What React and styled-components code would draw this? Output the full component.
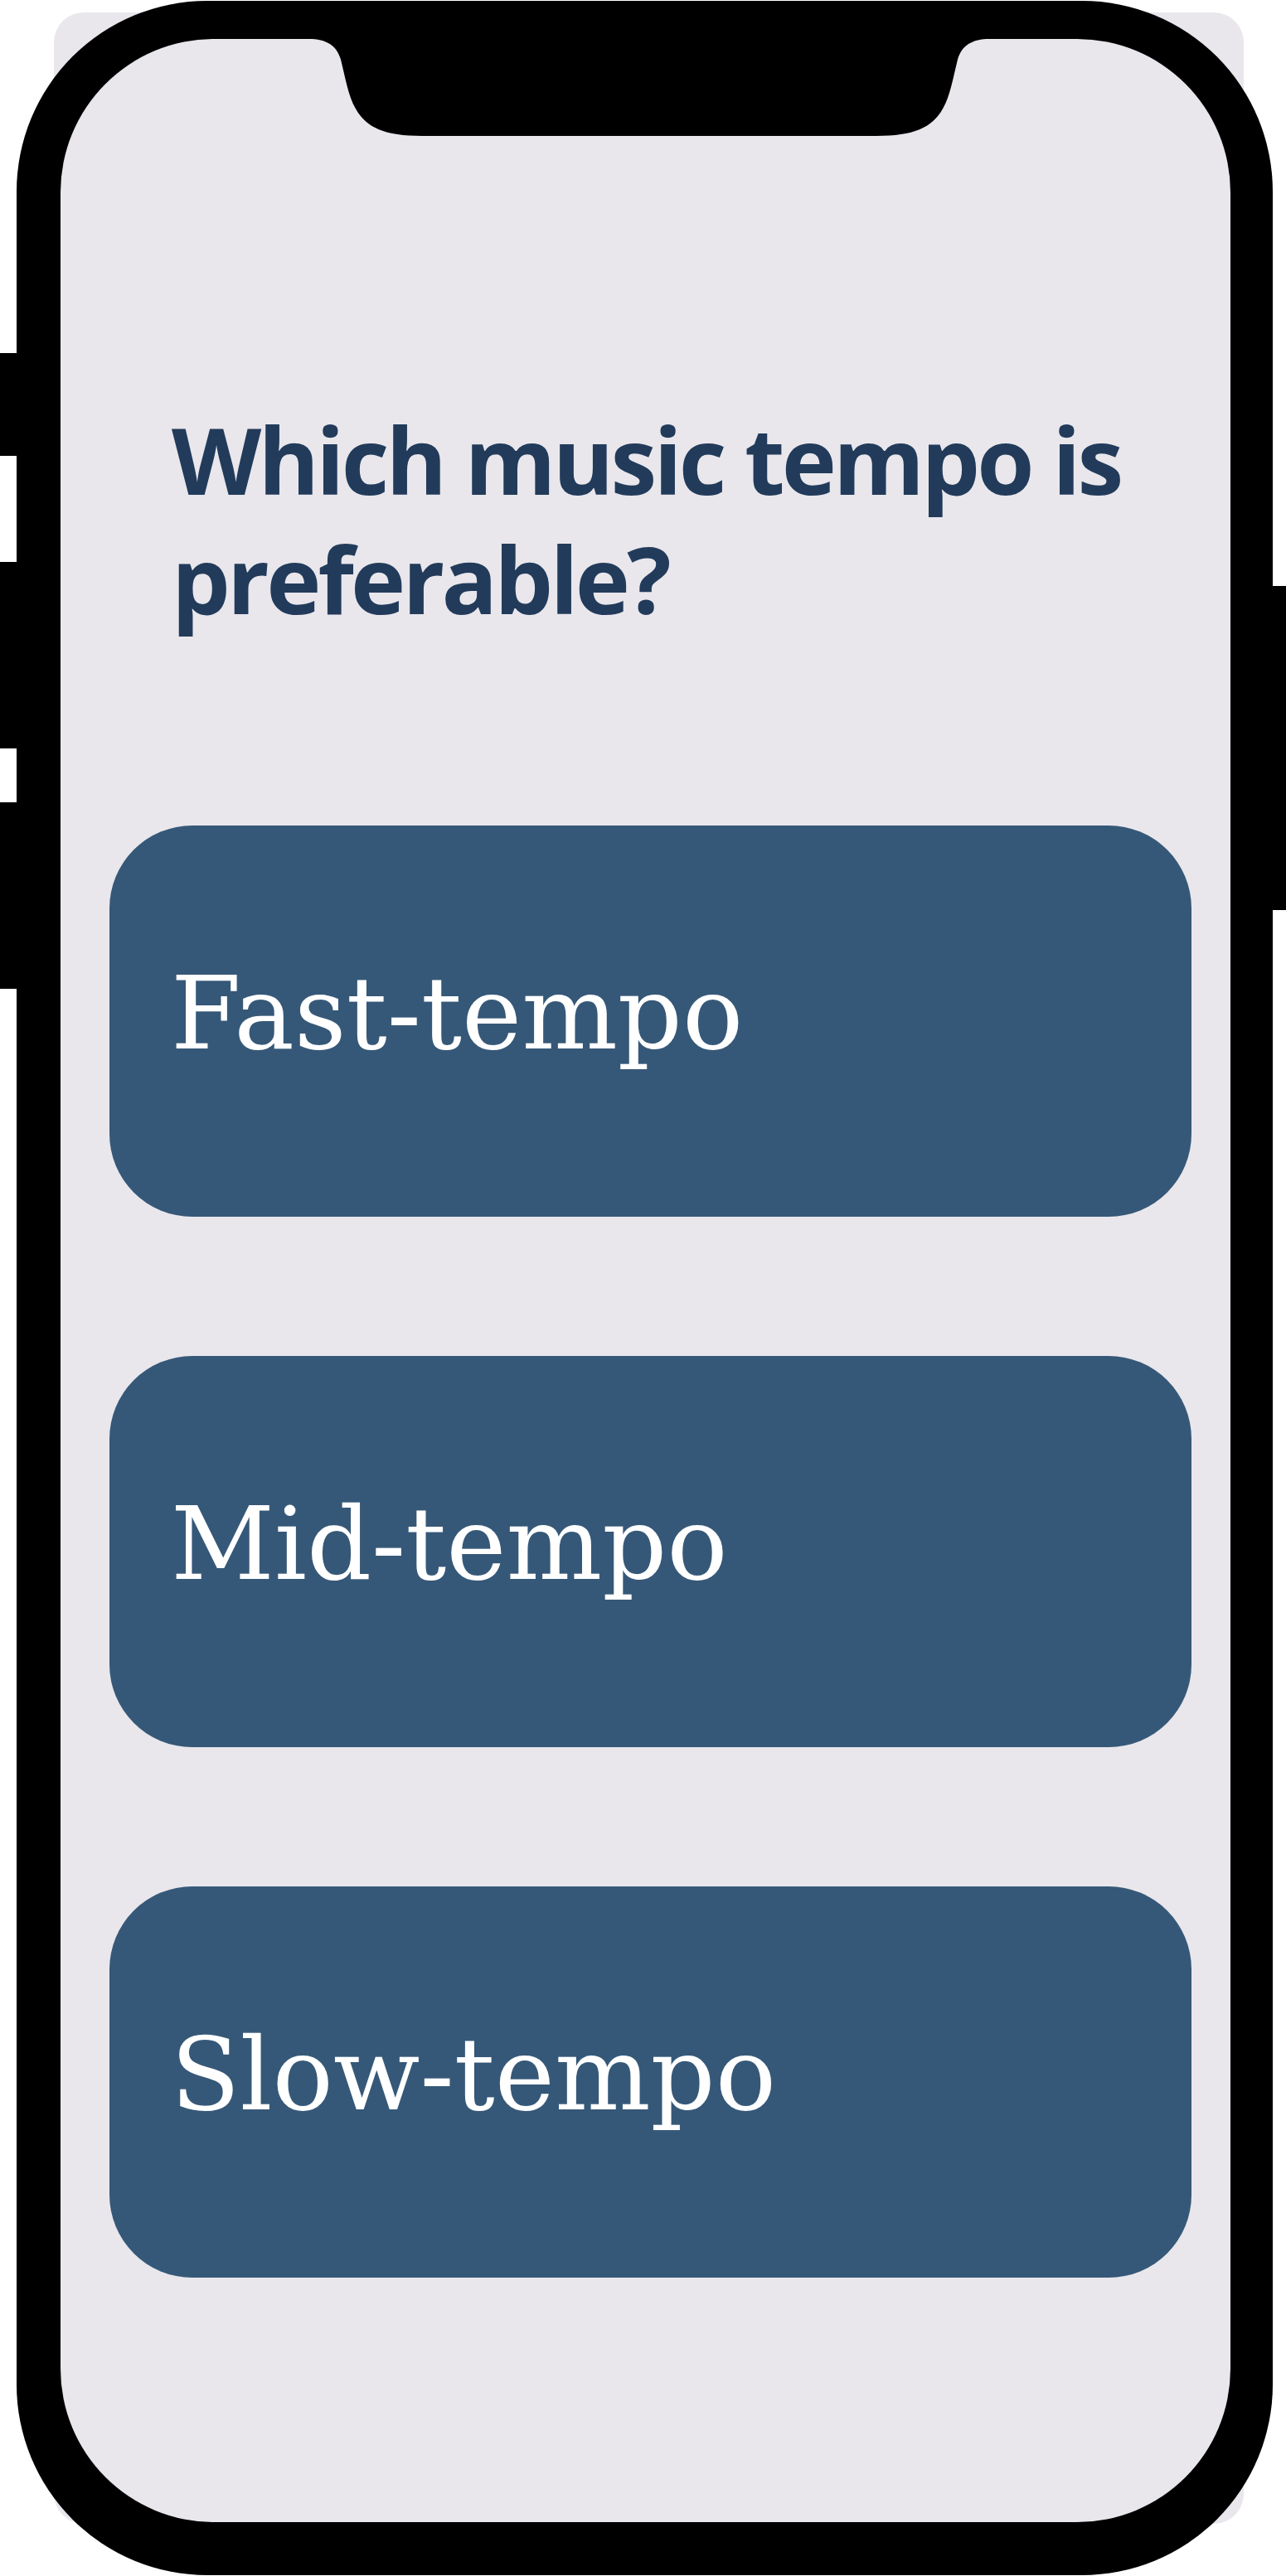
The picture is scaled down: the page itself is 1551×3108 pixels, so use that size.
import React from 'react';
import styled, { createGlobalStyle } from 'styled-components';

const GlobalStyle = createGlobalStyle`
  * {
    box-sizing: border-box;
  }

  body {
    margin: 0;
    background: #ffffff;
  }
`;

// Page stage: side buttons, phone, side buttons in one row.
// The light card peeking out behind the phone is a pseudo element.
const Stage = styled.div`
  position: relative;
  display: flex;
  width: 1551px;
  height: 3108px;
  padding-top: 1px;

  &::before {
    content: '';
    position: absolute;
    left: 65px;
    top: 15px;
    width: 1435px;
    height: 3030px;
    border-radius: 36px;
    background: #e9e7ec;
  }
`;

const Rail = styled.div`
  display: flex;
  flex-direction: column;
  flex-shrink: 0;
  width: ${({ width }) => width}px;
  padding-top: ${({ offset }) => offset}px;
`;

const SideButton = styled.span`
  display: block;
  height: ${({ height }) => height}px;
  margin-top: ${({ gap = 0 }) => gap}px;
  margin-left: ${({ side }) => (side === 'left' ? '0' : '-4px')};
  margin-right: ${({ side }) => (side === 'left' ? '-4px' : '0')};
  background: #000000;
`;

const Phone = styled.div`
  position: relative;
  flex-shrink: 0;
  width: 1515px;
  height: 3106px;
  padding: 46px 51px 64px 53px;
  background: #000000;
  border-radius: 230px;
`;

const Screen = styled.div`
  display: flex;
  flex-direction: column;
  height: 100%;
  padding: 0 47px 0 59px;
  background: #e9e7ec;
  border-radius: 185px;
`;

const Notch = styled.svg`
  display: block;
  flex-shrink: 0;
  align-self: center;
  width: 858px;
  height: 119px;
  margin: -1px 0 0 -4px;
`;

const Question = styled.h1`
  margin: 317px 0 226px;
  padding-left: 75px;
  font-family: 'Open Sans', 'Noto Sans', sans-serif;
  font-weight: 700;
  font-size: 112px;
  line-height: 144px;
  letter-spacing: -3.8px;
  color: #223b5b;
`;

const Options = styled.div`
  display: flex;
  flex-direction: column;
  gap: 168px;
`;

const Option = styled.button`
  display: flex;
  align-items: center;
  width: 1305px;
  height: 472px;
  padding: 0 0 18px 74px;
  border: none;
  border-radius: 100px;
  background: #365878;
  color: #ffffff;
  font-family: 'DejaVu Serif', 'Liberation Serif', serif;
  font-weight: 400;
  font-size: 122px;
  text-align: left;
  cursor: pointer;
`;

const options = ['Fast-tempo', 'Mid-tempo', 'Slow-tempo'];

export default function App() {
  return (
    <>
      <GlobalStyle />
      <Stage>
        <Rail width={20} offset={425}>
          <SideButton side="left" height={124} />
          <SideButton side="left" height={225} gap={128} />
          <SideButton side="left" height={225} gap={65} />
        </Rail>
        <Phone>
          <Screen>
            <Notch viewBox="0 -1 858 120" preserveAspectRatio="none">
              <path
                d="M0 -1 V0 H18 C40 0 52 8 57 25 C62 45 66 70 75 85 C88 108 110 118 155 118 H703 C748 118 770 108 783 85 C792 70 796 45 801 25 C806 8 818 0 840 0 H858 V-1 Z"
                fill="#000000"
              />
            </Notch>
            <Question>Which music tempo is preferable?</Question>
            <Options>
              {options.map((label) => (
                <Option key={label}>{label}</Option>
              ))}
            </Options>
          </Screen>
        </Phone>
        <Rail width={16} offset={706}>
          <SideButton side="right" height={391} />
        </Rail>
      </Stage>
    </>
  );
}
